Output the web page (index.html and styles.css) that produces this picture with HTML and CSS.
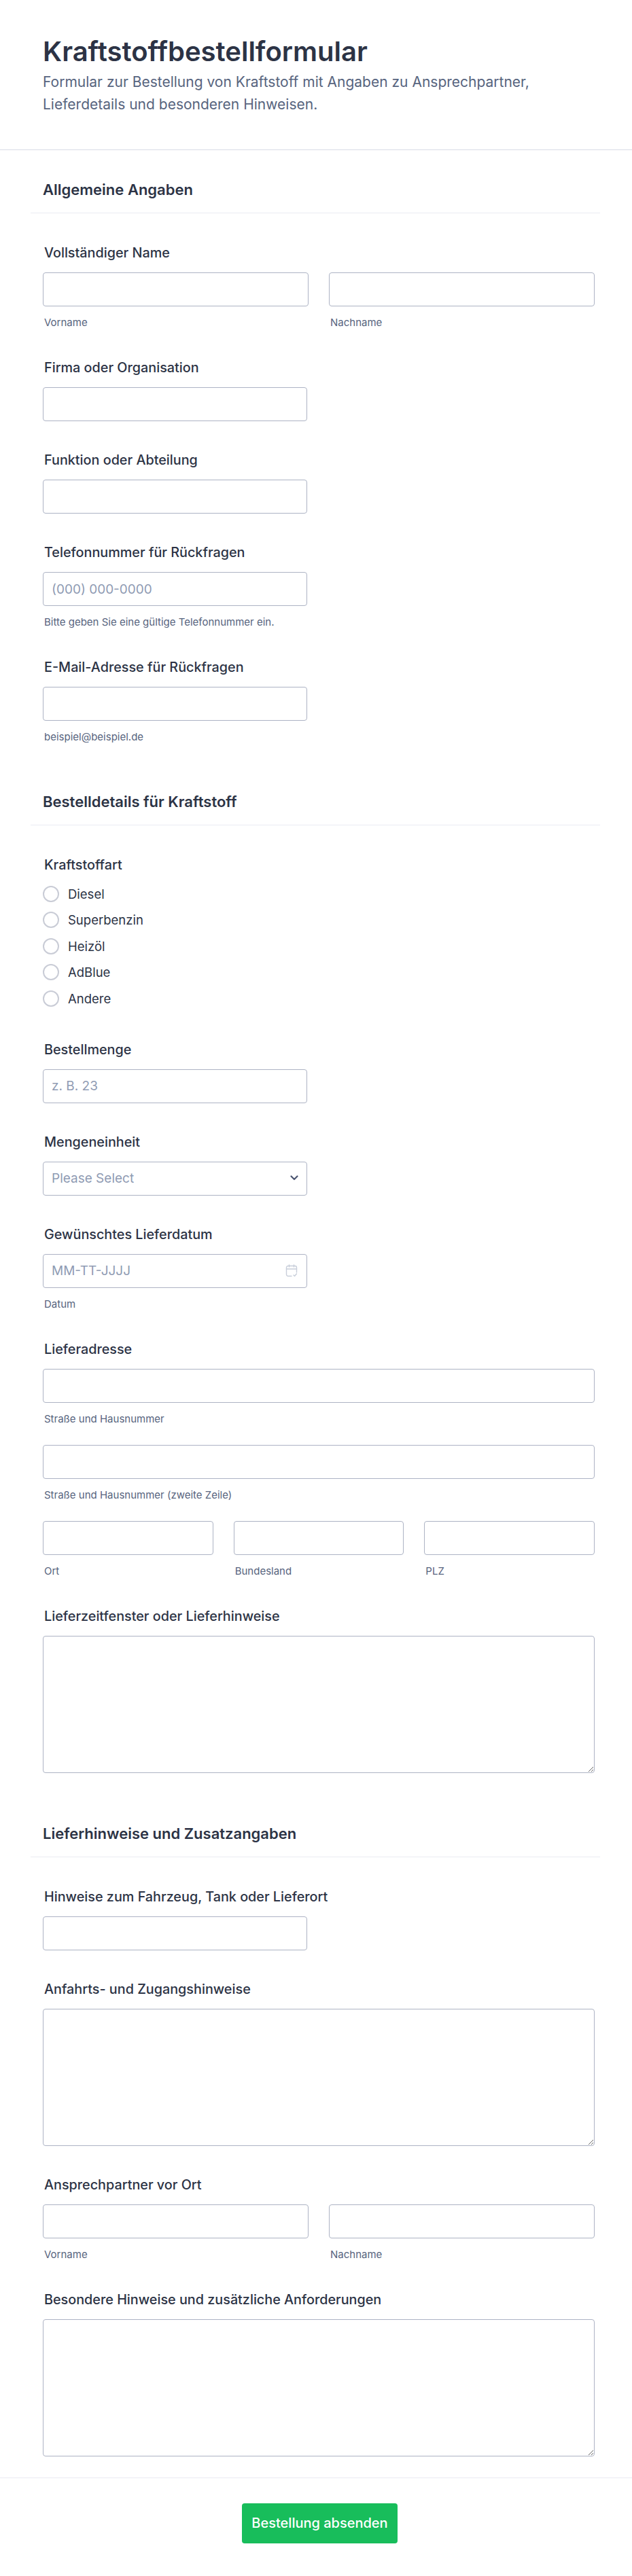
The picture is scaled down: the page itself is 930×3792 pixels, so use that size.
FILE: index.html
```html
<!DOCTYPE html>
<html lang="de">
<head>
    <meta charset="UTF-8">
    <meta name="viewport" content="width=device-width, initial-scale=1.0">
    <title>Kraftstoffbestellformular</title>
    <link rel="stylesheet" href="styles.css">
</head>
<body>
    <header class="form-header">
        <h1>Kraftstoffbestellformular</h1>
        <p>Formular zur Bestellung von Kraftstoff mit Angaben zu Ansprechpartner, Lieferdetails und besonderen Hinweisen.</p>
    </header>
    <form class="form-body">
        <section class="section section-first">
            <h2 class="section-title">Allgemeine Angaben</h2>
            <div class="field">
                <label class="label">Vollständiger Name</label>
                <div class="cols cols-2">
                    <div><input class="input" type="text"><span class="sub">Vorname</span></div>
                    <div><input class="input" type="text"><span class="sub">Nachname</span></div>
                </div>
            </div>
            <div class="field">
                <label class="label">Firma oder Organisation</label>
                <input class="input input-short" type="text">
            </div>
            <div class="field">
                <label class="label">Funktion oder Abteilung</label>
                <input class="input input-short" type="text">
            </div>
            <div class="field">
                <label class="label">Telefonnummer für Rückfragen</label>
                <input class="input input-short" type="text" placeholder="(000) 000-0000">
                <span class="sub">Bitte geben Sie eine gültige Telefonnummer ein.</span>
            </div>
            <div class="field">
                <label class="label">E-Mail-Adresse für Rückfragen</label>
                <input class="input input-short" type="text">
                <span class="sub">beispiel@beispiel.de</span>
            </div>
        </section>
        <section class="section">
            <h2 class="section-title">Bestelldetails für Kraftstoff</h2>
            <div class="field">
                <label class="label label-radio">Kraftstoffart</label>
                <div class="radio-list">
                    <label class="radio"><input type="radio" name="fuel">Diesel</label>
                    <label class="radio"><input type="radio" name="fuel">Superbenzin</label>
                    <label class="radio"><input type="radio" name="fuel">Heizöl</label>
                    <label class="radio"><input type="radio" name="fuel">AdBlue</label>
                    <label class="radio"><input type="radio" name="fuel">Andere</label>
                </div>
            </div>
            <div class="field">
                <label class="label">Bestellmenge</label>
                <input class="input input-short" type="text" placeholder="z. B. 23">
            </div>
            <div class="field">
                <label class="label">Mengeneinheit</label>
                <div class="input-wrap">
                    <select class="input select">
                        <option>Please Select</option>
                    </select>
                    <svg class="icon-chevron" width="12" height="8" viewBox="0 0 12 8"><path d="M1.5 1.5 6 6l4.5-4.5" fill="none" stroke="#4c5672" stroke-width="2.2" stroke-linecap="round" stroke-linejoin="round"/></svg>
                </div>
            </div>
            <div class="field">
                <label class="label">Gewünschtes Lieferdatum</label>
                <div class="input-wrap">
                    <input class="input" type="text" placeholder="MM-TT-JJJJ">
                    <svg class="icon-date" width="18" height="19" viewBox="0 0 18 19" fill="none" stroke="#c8ceda" stroke-width="1.4" stroke-linecap="round" stroke-linejoin="round"><path d="M9 17.5H4a2.5 2.5 0 0 1-2.5-2.5V5A2.5 2.5 0 0 1 4 2.5h10A2.5 2.5 0 0 1 16.500 5v7"/><path d="M1.500 7h15M5.500 1v3M12.500 1v3"/><path d="m12 16 1.500 1.500 3-3.500"/></svg>
                </div>
                <span class="sub">Datum</span>
            </div>
            <div class="field">
                <label class="label">Lieferadresse</label>
                <div class="address-line">
                    <input class="input" type="text">
                    <span class="sub">Straße und Hausnummer</span>
                </div>
                <div class="address-line">
                    <input class="input" type="text">
                    <span class="sub">Straße und Hausnummer (zweite Zeile)</span>
                </div>
                <div class="cols cols-3">
                    <div><input class="input" type="text"><span class="sub">Ort</span></div>
                    <div><input class="input" type="text"><span class="sub">Bundesland</span></div>
                    <div><input class="input" type="text"><span class="sub">PLZ</span></div>
                </div>
            </div>
            <div class="field">
                <label class="label">Lieferzeitfenster oder Lieferhinweise</label>
                <textarea class="textarea"></textarea>
            </div>
        </section>
        <section class="section section-last">
            <h2 class="section-title">Lieferhinweise und Zusatzangaben</h2>
            <div class="field">
                <label class="label">Hinweise zum Fahrzeug, Tank oder Lieferort</label>
                <input class="input input-short" type="text">
            </div>
            <div class="field">
                <label class="label">Anfahrts- und Zugangshinweise</label>
                <textarea class="textarea"></textarea>
            </div>
            <div class="field">
                <label class="label">Ansprechpartner vor Ort</label>
                <div class="cols cols-2">
                    <div><input class="input" type="text"><span class="sub">Vorname</span></div>
                    <div><input class="input" type="text"><span class="sub">Nachname</span></div>
                </div>
            </div>
            <div class="field field-last">
                <label class="label">Besondere Hinweise und zusätzliche Anforderungen</label>
                <textarea class="textarea"></textarea>
            </div>
        </section>
    </form>
    <footer class="form-footer">
        <button class="submit" type="button">Bestellung absenden</button>
    </footer>
</body>
</html>
```

FILE: styles.css
```css
* {
    box-sizing: border-box;
}
body {
    margin: 0;
    background-color: #fff;
    color: #2c3345;
    font-family: Inter, "Noto Sans", sans-serif;
}
.form-header {
    height: 221px;
    padding: 52px 63px 0;
    border-bottom: 1px solid #d8dce6;
}
.form-header h1 {
    margin: 0;
    font-size: 40px;
    line-height: 48px;
    font-weight: 600;
}
.form-header p {
    margin: 4px 0 0;
    color: #57647e;
    font-size: 21px;
    line-height: 33px;
}
.form-body {
    padding: 0 55px 0 63px;
}
.section-first {
    padding-top: 43px;
}
.section-title {
    margin: 71px -8px 46px -18px;
    padding: 0 0 19px 18px;
    border-bottom: 1px solid #eaebf2;
    font-size: 22px;
    line-height: 30px;
    font-weight: 600;
}
.section-first .section-title {
    margin-top: 0;
}
.section-last .section-title {
    margin-top: 74px;
}
.field {
    margin-bottom: 45px;
}
.field-last {
    margin-bottom: 31px;
}
.label {
    display: block;
    margin: 0 0 17px 2px;
    font-size: 19.8px;
    line-height: 24px;
    font-weight: 500;
}
.label-radio {
    margin-bottom: 19px;
}
.input {
    display: block;
    width: 100%;
    height: 50px;
    padding: 0 12px;
    border: 1px solid #adb3c4;
    border-radius: 4px;
    background-color: #fff;
    color: #2c3345;
    font-family: inherit;
    font-size: 19px;
}
.input::placeholder {
    color: #8f9bb3;
    opacity: 1;
}
.input-short,
.input-wrap {
    width: 389px;
}
.input-wrap {
    position: relative;
}
.select {
    appearance: none;
    color: #8f9bb3;
}
.icon-chevron {
    position: absolute;
    top: 20px;
    right: 13px;
}
.icon-date {
    position: absolute;
    top: 15px;
    right: 14px;
}
.sub {
    display: block;
    margin: 14px 0 0 2px;
    color: #57647e;
    font-size: 15px;
    line-height: 19px;
}
.cols {
    display: grid;
    gap: 30px;
}
.cols-2 {
    grid-template-columns: 1fr 1fr;
}
.cols-3 {
    grid-template-columns: 1fr 1fr 1fr;
}
.address-line {
    margin-bottom: 29px;
}
.textarea {
    display: block;
    width: 100%;
    height: 202px;
    border: 1px solid #adb3c4;
    border-radius: 4px;
    background-color: #fff;
}
.radio-list {
    display: flex;
    flex-direction: column;
    gap: 14.4px;
    padding-bottom: 6.4px;
}
.radio {
    display: flex;
    align-items: center;
    gap: 13px;
    font-size: 18.5px;
    line-height: 24px;
}
.radio input {
    appearance: none;
    width: 24px;
    height: 24px;
    margin: 0;
    border: 2px solid #c9ccd6;
    border-radius: 50%;
    background-color: #fff;
}
.form-footer {
    display: flex;
    justify-content: center;
    height: 144px;
    padding-top: 37px;
    border-top: 1px solid #eaebf2;
}
.submit {
    width: 229px;
    height: 59px;
    margin-left: 11px;
    border: 0;
    border-radius: 4px;
    background-color: #18bd5b;
    color: #fff;
    font-family: inherit;
    font-size: 20px;
    font-weight: 500;
}
```
